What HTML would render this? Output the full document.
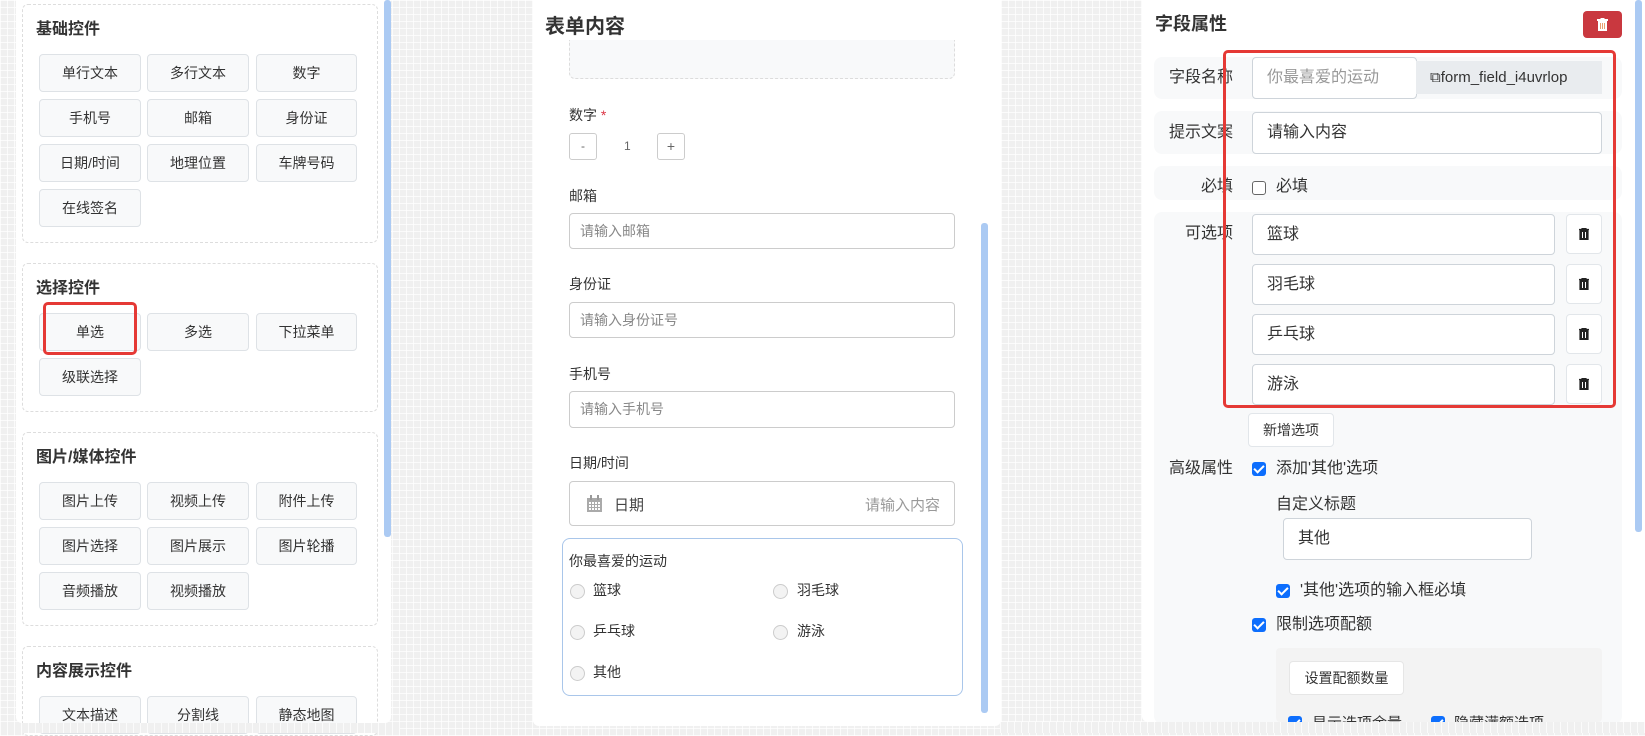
<!DOCTYPE html>
<html><head><meta charset="utf-8"><style>
*{box-sizing:border-box;margin:0;padding:0}
body{width:1645px;height:733px;overflow:hidden;position:relative;font-family:"Liberation Sans","Noto Sans CJK SC",sans-serif;color:#333;
background-color:#f0f0f0;background-image:linear-gradient(rgba(255,255,255,.7) 1px,transparent 1px),linear-gradient(90deg,rgba(255,255,255,.7) 1px,transparent 1px);background-size:7px 7px}
.a{position:absolute}
.panel{position:absolute;background:#fff;border-radius:6px}
.sec{position:absolute;left:22px;width:356px;border:1px dashed #ddd;border-radius:6px;background:#fff}
.st{position:absolute;left:36px;font-size:16px;font-weight:bold;color:#333;line-height:20px}
.btn{position:absolute;width:102px;height:38px;background:#f8f9fa;border:1px solid #dee2e6;border-radius:4px;font-size:14px;color:#333;text-align:center;line-height:36px}
.sb{position:absolute;background:#abcaf3;border-radius:3px;width:7px}
.lbl{position:absolute;font-size:14px;color:#333;line-height:18px}
.inp{position:absolute;border:1px solid #ccc;border-radius:4px;background:#fff;font-size:14px;color:#888;padding-left:10px}
.radio{position:absolute;width:15px;height:15px;border:1px solid #ccc;border-radius:50%;background:#f3f3f3}
.rl{position:absolute;font-size:14px;color:#333;line-height:18px}
.row{position:absolute;left:1154px;width:468px;background:#f8f9fa;border-radius:8px}
.rlab{position:absolute;font-size:16px;color:#333;line-height:20px;text-align:right;width:80px;left:1153px}
.rin{position:absolute;background:#fff;border:1px solid #ced4da;border-radius:4px;font-size:16px;color:#333;padding-left:14px}
.tr{position:absolute;left:1566px;width:36px;height:40px;background:#fff;border:1px solid #e2e6ea;border-radius:4px}
.cb{position:absolute;width:14px;height:14px;border-radius:3px;background:#0d6efd}
.cb:after{content:"";position:absolute;left:4px;top:1px;width:4px;height:8px;border:solid #fff;border-width:0 2px 2px 0;transform:rotate(45deg)}
.t16{position:absolute;font-size:16px;color:#333;line-height:20px}
</style></head><body>

<!-- LEFT PANEL -->
<div class="panel" style="left:16px;top:-6px;width:375px;height:729px"></div>
<div class="sb" style="left:384px;top:0;height:537px"></div>

<div class="sec" style="top:4px;height:239px"></div>
<div class="st" style="top:20px">基础控件</div>
<div class="btn" style="left:39px;top:54px">单行文本</div>
<div class="btn" style="left:147px;top:54px">多行文本</div>
<div class="btn" style="left:256px;top:54px;width:101px">数字</div>
<div class="btn" style="left:39px;top:99px">手机号</div>
<div class="btn" style="left:147px;top:99px">邮箱</div>
<div class="btn" style="left:256px;top:99px;width:101px">身份证</div>
<div class="btn" style="left:39px;top:144px">日期/时间</div>
<div class="btn" style="left:147px;top:144px">地理位置</div>
<div class="btn" style="left:256px;top:144px;width:101px">车牌号码</div>
<div class="btn" style="left:39px;top:189px">在线签名</div>

<div class="sec" style="top:263px;height:149px"></div>
<div class="st" style="top:279px">选择控件</div>
<div class="btn" style="left:39px;top:313px">单选</div>
<div class="btn" style="left:147px;top:313px">多选</div>
<div class="btn" style="left:256px;top:313px;width:101px">下拉菜单</div>
<div class="btn" style="left:39px;top:358px">级联选择</div>
<div class="a" style="left:43px;top:302px;width:94px;height:53px;border:3px solid #e53935;border-radius:5px"></div>

<div class="sec" style="top:432px;height:194px"></div>
<div class="st" style="top:448px">图片/媒体控件</div>
<div class="btn" style="left:39px;top:482px">图片上传</div>
<div class="btn" style="left:147px;top:482px">视频上传</div>
<div class="btn" style="left:256px;top:482px;width:101px">附件上传</div>
<div class="btn" style="left:39px;top:527px">图片选择</div>
<div class="btn" style="left:147px;top:527px">图片展示</div>
<div class="btn" style="left:256px;top:527px;width:101px">图片轮播</div>
<div class="btn" style="left:39px;top:572px">音频播放</div>
<div class="btn" style="left:147px;top:572px">视频播放</div>

<div class="sec" style="top:646px;height:90px"></div>
<div class="st" style="top:662px">内容展示控件</div>
<div class="btn" style="left:39px;top:696px">文本描述</div>
<div class="btn" style="left:147px;top:696px">分割线</div>
<div class="btn" style="left:256px;top:696px;width:101px">静态地图</div>
<div class="a" style="left:0;top:723px;width:400px;height:10px;background:#f0f0f0;background-image:linear-gradient(90deg,rgba(255,255,255,.7) 1px,transparent 1px);background-size:7px 7px"></div>

<!-- MIDDLE PANEL -->
<div class="panel" style="left:533px;top:-6px;width:468px;height:732px"></div>
<div class="a" style="left:545px;top:15px;font-size:20px;font-weight:bold;color:#333;line-height:24px">表单内容</div>
<div class="a" style="left:569px;top:40px;width:386px;height:39px;background:#f8f9fa;border:1px dashed #dcdcdc;border-top:none;border-radius:0 0 6px 6px"></div>
<div class="lbl" style="left:569px;top:106px">数字 <span style="color:#dc3545">*</span></div>
<div class="a" style="left:569px;top:133px;width:28px;height:27px;border:1px solid #ccc;border-radius:3px;font-size:12px;text-align:center;line-height:25px;color:#666">-</div>
<div class="a" style="left:624px;top:139px;font-size:12px;color:#666">1</div>
<div class="a" style="left:657px;top:133px;width:28px;height:27px;border:1px solid #ccc;border-radius:3px;font-size:14px;text-align:center;line-height:25px;color:#666">+</div>
<div class="lbl" style="left:569px;top:187px">邮箱</div>
<div class="inp" style="left:569px;top:213px;width:386px;height:36px;line-height:34px">请输入邮箱</div>
<div class="lbl" style="left:569px;top:275px">身份证</div>
<div class="inp" style="left:569px;top:302px;width:386px;height:36px;line-height:34px">请输入身份证号</div>
<div class="lbl" style="left:569px;top:365px">手机号</div>
<div class="inp" style="left:569px;top:391px;width:386px;height:37px;line-height:35px">请输入手机号</div>
<div class="lbl" style="left:569px;top:454px">日期/时间</div>
<div class="inp" style="left:569px;top:481px;width:386px;height:45px;color:#333">
 <svg class="a" style="left:16px;top:13px" width="17" height="18" viewBox="0 0 17 18"><rect x="1" y="3" width="15" height="14" fill="#aaa"/><rect x="4" y="0" width="2" height="5" fill="#999"/><rect x="11" y="0" width="2" height="5" fill="#999"/><g fill="#fff"><rect x="3" y="7" width="2" height="2"/><rect x="6" y="7" width="2" height="2"/><rect x="9" y="7" width="2" height="2"/><rect x="12" y="7" width="2" height="2"/><rect x="3" y="10" width="2" height="2"/><rect x="6" y="10" width="2" height="2"/><rect x="9" y="10" width="2" height="2"/><rect x="12" y="10" width="2" height="2"/><rect x="3" y="13" width="2" height="2"/><rect x="6" y="13" width="2" height="2"/><rect x="9" y="13" width="2" height="2"/><rect x="12" y="13" width="2" height="2"/></g></svg>
 <span class="a" style="left:44px;top:12px;font-size:15px;color:#444">日期</span>
 <span class="a" style="right:14px;top:12px;font-size:15px;color:#999">请输入内容</span>
</div>
<div class="a" style="left:562px;top:538px;width:401px;height:158px;border:1px solid #a9c6ea;border-radius:8px"></div>
<div class="rl" style="left:569px;top:552px">你最喜爱的运动</div>
<div class="radio" style="left:570px;top:584px"></div><div class="rl" style="left:593px;top:581px">篮球</div>
<div class="radio" style="left:773px;top:584px"></div><div class="rl" style="left:797px;top:581px">羽毛球</div>
<div class="radio" style="left:570px;top:625px"></div><div class="rl" style="left:593px;top:622px">乒乓球</div>
<div class="radio" style="left:773px;top:625px"></div><div class="rl" style="left:797px;top:622px">游泳</div>
<div class="radio" style="left:570px;top:666px"></div><div class="rl" style="left:593px;top:663px">其他</div>
<div class="sb" style="left:981px;top:223px;height:490px"></div>

<!-- RIGHT PANEL -->
<div class="panel" style="left:1142px;top:-6px;width:510px;height:728px"></div>
<div class="a" style="left:1155px;top:13px;font-size:18px;font-weight:bold;color:#333;line-height:22px">字段属性</div>
<div class="a" style="left:1583px;top:11px;width:39px;height:27px;background:#c9383f;border-radius:4px">
 <svg class="a" style="left:14px;top:7px" width="11" height="13" viewBox="0 0 11 13"><rect x="0" y="1" width="11" height="2" fill="#fff"/><rect x="3.5" y="0" width="4" height="2" fill="#fff"/><rect x="1" y="3" width="9" height="10" fill="#fff"/><rect x="3" y="5" width="1" height="6" fill="#e8a070"/><rect x="5" y="5" width="1" height="6" fill="#e8a070"/><rect x="7" y="5" width="1" height="6" fill="#e8a070"/></svg>
</div>

<div class="row" style="top:57px;height:42px"></div>
<div class="rlab" style="top:68px">字段名称</div>
<div class="rin" style="left:1252px;top:57px;width:165px;height:42px;line-height:40px;color:#999">你最喜爱的运动</div>
<div class="a" style="left:1416px;top:61px;width:186px;height:33px;background:#e9ecef;font-size:15px;line-height:33px;color:#333;padding-left:14px">⧉form_field_i4uvrlop</div>

<div class="row" style="top:111px;height:43px"></div>
<div class="rlab" style="top:123px">提示文案</div>
<div class="rin" style="left:1252px;top:112px;width:350px;height:42px;line-height:40px">请输入内容</div>

<div class="row" style="top:166px;height:34px"></div>
<div class="rlab" style="top:177px">必填</div>
<div class="a" style="left:1252px;top:181px;width:14px;height:14px;border:1px solid #666;border-radius:3px;background:#fff"></div>
<div class="t16" style="left:1276px;top:177px">必填</div>

<div class="row" style="top:212px;height:512px"></div>
<div class="rlab" style="top:224px">可选项</div>
<div class="rin" style="left:1252px;top:214px;width:303px;height:41px;line-height:39px">篮球</div>
<div class="rin" style="left:1252px;top:264px;width:303px;height:41px;line-height:39px">羽毛球</div>
<div class="rin" style="left:1252px;top:314px;width:303px;height:41px;line-height:39px">乒乓球</div>
<div class="rin" style="left:1252px;top:364px;width:303px;height:41px;line-height:39px">游泳</div>
<div class="tr" style="top:214px"></div><div class="tr" style="top:264px"></div><div class="tr" style="top:314px"></div><div class="tr" style="top:364px"></div>
<svg class="a" style="left:1579px;top:228px" width="10" height="12" viewBox="0 0 10 12"><path d="M0 1.5h10M3 1.5V0h4v1.5M1 2.5h8V12H1z" stroke="#222" stroke-width="1.2" fill="#222"/><path d="M3.5 4v6M6.5 4v6" stroke="#fff" stroke-width="1"/></svg>
<svg class="a" style="left:1579px;top:278px" width="10" height="12" viewBox="0 0 10 12"><path d="M0 1.5h10M3 1.5V0h4v1.5M1 2.5h8V12H1z" stroke="#222" stroke-width="1.2" fill="#222"/><path d="M3.5 4v6M6.5 4v6" stroke="#fff" stroke-width="1"/></svg>
<svg class="a" style="left:1579px;top:328px" width="10" height="12" viewBox="0 0 10 12"><path d="M0 1.5h10M3 1.5V0h4v1.5M1 2.5h8V12H1z" stroke="#222" stroke-width="1.2" fill="#222"/><path d="M3.5 4v6M6.5 4v6" stroke="#fff" stroke-width="1"/></svg>
<svg class="a" style="left:1579px;top:378px" width="10" height="12" viewBox="0 0 10 12"><path d="M0 1.5h10M3 1.5V0h4v1.5M1 2.5h8V12H1z" stroke="#222" stroke-width="1.2" fill="#222"/><path d="M3.5 4v6M6.5 4v6" stroke="#fff" stroke-width="1"/></svg>
<div class="a" style="left:1223px;top:50px;width:393px;height:358px;border:3px solid #e53935;border-radius:5px"></div>

<div class="a" style="left:1248px;top:413px;width:86px;height:34px;background:#fff;border:1px solid #e2e6ea;border-radius:4px;font-size:14px;text-align:center;line-height:32px;color:#333">新增选项</div>
<div class="rlab" style="top:459px">高级属性</div>
<div class="cb" style="left:1252px;top:462px"></div>
<div class="t16" style="left:1276px;top:459px">添加'其他'选项</div>
<div class="t16" style="left:1276px;top:495px">自定义标题</div>
<div class="rin" style="left:1283px;top:518px;width:249px;height:42px;line-height:40px">其他</div>
<div class="cb" style="left:1276px;top:584px"></div>
<div class="t16" style="left:1300px;top:581px">'其他'选项的输入框必填</div>
<div class="cb" style="left:1252px;top:618px"></div>
<div class="t16" style="left:1276px;top:615px">限制选项配额</div>
<div class="a" style="left:1276px;top:648px;width:326px;height:74px;background:#f3f3f3;border-radius:4px;overflow:hidden">
 <div class="a" style="left:13px;top:13px;width:115px;height:34px;background:#fff;border:1px solid #e6e6e6;border-radius:4px;font-size:14px;text-align:center;line-height:32px;color:#333">设置配额数量</div>
 <div class="cb" style="left:12px;top:68px"></div>
 <div class="a" style="left:36px;top:64px;font-size:15px;color:#333">显示选项余量</div>
 <div class="cb" style="left:155px;top:68px"></div>
 <div class="a" style="left:178px;top:64px;font-size:15px;color:#333">隐藏满额选项</div>
</div>
<div class="sb" style="left:1635px;top:0;height:532px"></div>
<div class="a" style="left:1000px;top:722px;width:645px;height:11px;background:#f0f0f0;background-image:linear-gradient(90deg,rgba(255,255,255,.7) 1px,transparent 1px);background-size:7px 7px"></div>
</body></html>
